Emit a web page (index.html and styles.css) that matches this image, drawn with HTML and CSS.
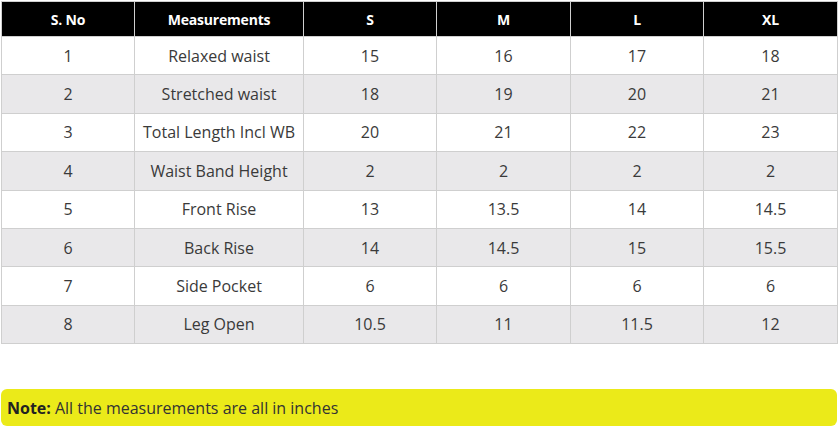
FILE: index.html
```html
<!DOCTYPE html>
<html>
<head>
<meta charset="utf-8">
<link rel="stylesheet" href="styles.css">
</head>
<body>
<div class="page">
<table class="size-table">
<colgroup>
<col class="c1"><col class="c2"><col class="c3"><col class="c4"><col class="c5"><col class="c6">
</colgroup>
<thead>
<tr><th>S. No</th><th>Measurements</th><th>S</th><th>M</th><th>L</th><th>XL</th></tr>
</thead>
<tbody>
<tr><td>1</td><td>Relaxed waist</td><td>15</td><td>16</td><td>17</td><td>18</td></tr>
<tr><td>2</td><td>Stretched waist</td><td>18</td><td>19</td><td>20</td><td>21</td></tr>
<tr><td>3</td><td>Total Length Incl WB</td><td>20</td><td>21</td><td>22</td><td>23</td></tr>
<tr><td>4</td><td>Waist Band Height</td><td>2</td><td>2</td><td>2</td><td>2</td></tr>
<tr><td>5</td><td>Front Rise</td><td>13</td><td>13.5</td><td>14</td><td>14.5</td></tr>
<tr><td>6</td><td>Back Rise</td><td>14</td><td>14.5</td><td>15</td><td>15.5</td></tr>
<tr><td>7</td><td>Side Pocket</td><td>6</td><td>6</td><td>6</td><td>6</td></tr>
<tr><td>8</td><td>Leg Open</td><td>10.5</td><td>11</td><td>11.5</td><td>12</td></tr>
</tbody>
</table>
<div class="note"><strong>Note:</strong> All the measurements are all in inches</div>
</div>
</body>
</html>
```
FILE: styles.css
```css
html, body {
  margin: 0;
  padding: 0;
  background: #fff;
}
.page {
  padding: 1px 2px 0 1px;
  font-family: "Open Sans", "Liberation Sans", sans-serif;
  color: #333;
}
.size-table {
  width: 836px;
  border-collapse: collapse;
  table-layout: fixed;
}
.c1 { width: 133px; }
.c2 { width: 169px; }
.c3 { width: 133px; }
.c4 { width: 134px; }
.c5 { width: 133px; }
.c6 { width: 134px; }
.size-table th {
  background: #000;
  color: #fff;
  font-weight: 700;
  font-size: 14px;
  height: 34px;
  padding: 0;
  border: 1px solid #cfcfcf;
  letter-spacing: -0.2px;
}
.size-table td {
  text-align: center;
  font-size: 16px;
  height: 37.4px;
  padding: 0;
  border: 1px solid #cfcfcf;
  color: #3a3a3a;
}
.size-table tbody tr:nth-child(even) td {
  background: #e9e8ea;
}
.note {
  margin-top: 45px;
  height: 37px;
  width: 836px;
  box-sizing: border-box;
  padding: 0 0 0 6px;
  display: flex;
  align-items: center;
  background: #ebea19;
  border-radius: 6px;
  font-size: 16px;
  color: #333;
}
.note strong {
  color: #222;
  font-weight: 700;
  margin-right: 4px;
}
```
